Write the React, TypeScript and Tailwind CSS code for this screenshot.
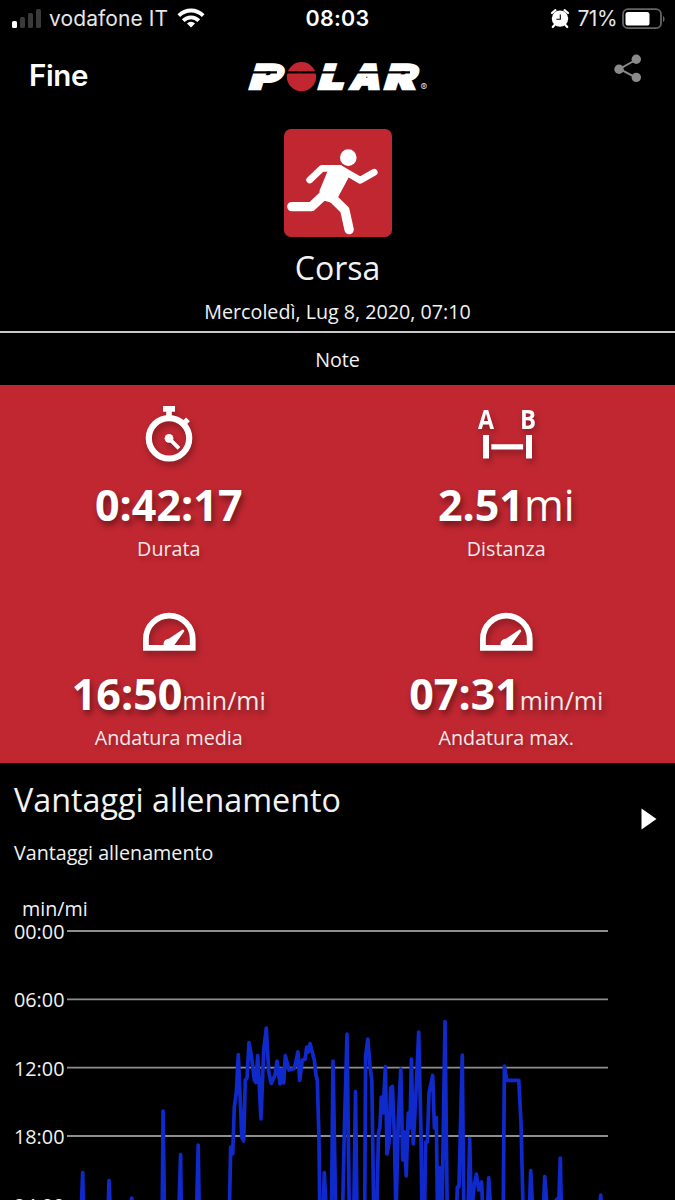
import React from "react";

const stats = [
  { icon: "stopwatch", value: "0:42:17", unit: "", label: "Durata" },
  { icon: "distance", value: "2.51", unit: "mi", label: "Distanza" },
  { icon: "gauge", value: "16:50", unit: "min/mi", label: "Andatura media" },
  { icon: "gauge", value: "07:31", unit: "min/mi", label: "Andatura max." },
];

const ticks = ["00:00", "06:00", "12:00", "18:00", "24:00"];

// pace samples, y grows downwards like the pace axis
const pace: [number, number][] = [
  [81, 1215], [82.7, 1172.5], [83.5, 1215],
  [108, 1215], [109, 1180.5], [110.5, 1215],
  [130.5, 1215], [131.7, 1198], [133, 1215],
  [162.2, 1215], [163.1, 1111], [164.5, 1215],
  [178.8, 1215], [180.6, 1154.5], [181.3, 1215],
  [196.5, 1215], [198.2, 1145], [199.3, 1215],
  [229.3, 1215], [230.7, 1147], [232.7, 1154], [234.3, 1107], [236.3, 1093],
  [238.3, 1054.5], [240.7, 1110], [241.7, 1137], [243.7, 1141], [245.3, 1080],
  [247, 1078], [249, 1042.5], [251.3, 1055], [254.3, 1080], [256, 1082.5],
  [257.7, 1055.5], [261, 1119], [263.7, 1050], [266.3, 1028], [268.7, 1072],
  [271.3, 1083.5], [275, 1075], [277, 1061], [280, 1084], [281.7, 1069],
  [283.7, 1083], [285.3, 1055.5], [289, 1070], [294.3, 1068.5], [298, 1052],
  [299.7, 1080.5], [302.3, 1060], [305, 1059.5], [306.7, 1047], [308.3, 1052],
  [310, 1043.5], [314.3, 1060], [316, 1075], [317.3, 1080], [319, 1140],
  [319.8, 1215], [323, 1215], [324.3, 1172.5], [326.5, 1215],
  [331.5, 1215], [333, 1061], [335.8, 1215],
  [342.5, 1215], [344.3, 1133], [347, 1034], [349.3, 1215],
  [353.8, 1215], [355.5, 1091.5], [357, 1215],
  [364.7, 1215], [365.6, 1057], [367.8, 1039], [370, 1066], [371.8, 1080],
  [373.8, 1215], [376.7, 1215], [378.5, 1133], [380, 1127], [381.3, 1097],
  [383, 1113], [385.4, 1066.5], [387, 1154], [389, 1143], [390.7, 1088],
  [392.4, 1086.5], [394.3, 1133], [396, 1215], [398.3, 1120], [400.8, 1069],
  [402.7, 1160], [404.3, 1132], [406.2, 1176], [408.3, 1113], [410, 1128],
  [411.4, 1059], [413.3, 1144], [416, 1093], [418.7, 1032], [421, 1133],
  [422, 1215], [424.5, 1215], [425.6, 1142], [427.4, 1142], [429, 1093],
  [432.7, 1075.5], [434.4, 1128], [436.3, 1117.5], [437.5, 1215],
  [440, 1167.5], [442, 1215], [445, 1021.5], [447.3, 1215],
  [456.5, 1215], [457.3, 1187], [459, 1187], [462.3, 1055], [463.8, 1215],
  [468, 1215], [469.7, 1138.5], [471.5, 1215], [474, 1187], [476.4, 1174],
  [478.7, 1190], [481.6, 1182], [483, 1215],
  [487.3, 1215], [488.7, 1177.5], [491, 1215],
  [503.2, 1215], [504.4, 1066], [506.7, 1080.3], [518.8, 1080.3], [521, 1123],
  [523.2, 1215], [529.3, 1215], [530.7, 1170.5], [533, 1215],
  [543.3, 1215], [544.7, 1176.5], [547.7, 1215],
  [556.5, 1200], [559, 1197], [560.3, 1158], [561.5, 1215],
  [599.5, 1215], [600.7, 1195], [602, 1215],
];

function StatusBar() {
  return (
    <div className="grid grid-cols-3 items-center h-[37px] font-['Inter',sans-serif] text-white">
      <div className="flex items-center pl-3">
        <svg width="30" height="20" viewBox="0 0 30 20">
          <rect x="0" y="12" width="5" height="7" rx="1.5" fill="#fff" />
          <rect x="8" y="8" width="5" height="11" rx="1.5" fill="#3a3a3a" />
          <rect x="16" y="4" width="5" height="15" rx="1.5" fill="#3a3a3a" />
          <rect x="24" y="0" width="5" height="19" rx="1.5" fill="#3a3a3a" />
        </svg>
        <span className="ml-[7px] text-[21px] leading-[37px] tracking-[0.1px] whitespace-nowrap text-[#e6e6e6]">vodafone IT</span>
        <svg className="ml-[9px] shrink-0" width="28" height="21" viewBox="0 0 28 21" fill="none" stroke="#fff" strokeWidth="3.8">
          <path d="M1.8 7.6a17.2 17.2 0 0 1 24.4 0" />
          <path d="M6.2 12.6a11 11 0 0 1 15.6 0" />
          <path d="M14 19.6l-4-4.1a5.7 5.7 0 0 1 8 0z" fill="#fff" stroke="none" />
        </svg>
      </div>
      <div className="text-center text-[21.5px] leading-[37px] font-semibold tracking-[0.3px]">08:03</div>
      <div className="flex items-center justify-end pr-[10px]">
        <svg width="20" height="20" viewBox="0 0 20 20">
          <circle cx="10" cy="9.6" r="8.2" fill="#fff" />
          <path d="M2 4L5.4 1.2M18 4L14.6 1.2M4.5 16L2.8 18M15.5 16l1.7 2" stroke="#fff" strokeWidth="2.2" strokeLinecap="round" />
          <path d="M10.3 5.4v4.8H6.4" stroke="#000" strokeWidth="1.1" fill="none" />
        </svg>
        <span className="ml-[7px] text-[21px] leading-[37px] font-normal tracking-[-0.5px] text-[#e6e6e6]">71%</span>
        <svg className="ml-[5px]" width="43" height="22" viewBox="0 0 43 22">
          <rect x="1" y="1.2" width="38" height="19" rx="5" fill="none" stroke="#666" strokeWidth="1.8" />
          <rect x="3.5" y="4" width="24" height="13.5" rx="2.6" fill="#fff" />
          <path d="M41 8v6c2-1 2-5 0-6z" fill="#666" />
        </svg>
      </div>
    </div>
  );
}

function Logo() {
  return (
    <svg className="overflow-visible" width="184" height="36" viewBox="0 0 184 36">
      <g fill="#fff" stroke="#fff" strokeWidth="2.6" fontFamily="Inter, sans-serif" fontWeight="900" fontSize="33.5">
        <text transform="translate(1 29.8) skewX(-17)" textLength="31" lengthAdjust="spacingAndGlyphs">P</text>
        <text transform="translate(70 29.8) skewX(-17)" textLength="25" lengthAdjust="spacingAndGlyphs">L</text>
        <text transform="translate(102 29.8) skewX(-14)" textLength="30" lengthAdjust="spacingAndGlyphs">A</text>
        <text transform="translate(136 29.8) skewX(-17)" textLength="31" lengthAdjust="spacingAndGlyphs">R</text>
      </g>
      <circle cx="54.5" cy="17.7" r="14.6" fill="#c12731" />
      <path d="M0 13.4H30M39 13.4H132M134 13.4H163" stroke="#000" strokeWidth="2.4" />
      <text x="173.5" y="31.8" fontFamily="Inter, sans-serif" fontSize="10" fill="#ddd">®</text>
    </svg>
  );
}

function ShareIcon() {
  return (
    <svg width="30" height="30" viewBox="0 0 30 30" fill="#8a8a8a">
      <path d="M23.5 5.5L6.5 15l17 8.8" fill="none" stroke="#8a8a8a" strokeWidth="2" />
      <circle cx="23.3" cy="5.3" r="4.7" />
      <circle cx="6" cy="15.2" r="4.7" />
      <circle cx="23.3" cy="23.4" r="4.7" />
    </svg>
  );
}

function Runner() {
  return (
    <svg width="108" height="108" viewBox="0 0 108 108" fill="none" stroke="#fff" strokeLinecap="round" strokeLinejoin="round">
      <circle cx="64.3" cy="28.6" r="8.3" fill="#fff" stroke="none" />
      <path d="M25.7 51L38 39.3h17" strokeWidth="6.8" />
      <path d="M57 40.1L76.2 51.3l14-8" strokeWidth="6.8" />
      <path d="M46 39L57 37L64 47.5L52.5 69L47 72.5L38 70L36.5 62Z" fill="#fff" strokeWidth="2" />
      <path d="M7.8 77.6H27.5L42 64" strokeWidth="9.4" />
      <path d="M47 67.5L60.8 81l4.3 19.6" strokeWidth="9.4" />
    </svg>
  );
}

function StatIcon({ name }: { name: string }) {
  if (name === "stopwatch") {
    return (
      <svg width="56" height="61" viewBox="0 0 56 61" fill="#fff" stroke="#fff">
        <circle cx="28" cy="34.3" r="20.2" fill="none" strokeWidth="6.2" />
        <path d="M22 2h12v5.7h-3.2V12h-5.6V7.7H22z" stroke="none" />
        <path d="M42 20.2l5-4.8" strokeWidth="5.4" />
        <circle cx="28" cy="34.3" r="4.4" stroke="none" />
        <path d="M28 34.3l10 10" strokeWidth="3.8" />
      </svg>
    );
  }
  if (name === "distance") {
    return (
      <svg className="overflow-visible" width="60" height="61" viewBox="0 0 60 61" fill="#fff">
        <g fontFamily="Open Sans, sans-serif" fontWeight="700" fontSize="27">
          <text x="2" y="25.4" textLength="16" lengthAdjust="spacingAndGlyphs">A</text>
          <text x="44" y="25.4" textLength="16" lengthAdjust="spacingAndGlyphs">B</text>
        </g>
        <path d="M7 31h6v23.5H7zM50 31h6v23.5h-6zM15.3 40.2h31.8v5.4H15.3z" />
      </svg>
    );
  }
  return (
    <svg width="56" height="44" viewBox="0 0 56 44" fill="#fff">
      <path d="M4.9 37.8V29a23.4 23.4 0 0 1 46.8 0v8.8z" fill="none" stroke="#fff" strokeWidth="5.8" />
      <circle cx="27.7" cy="34" r="5.2" />
      <path d="M41.6 19.6q2.2.2 1.5 2L32 37l-6-7z" />
    </svg>
  );
}

function StatTile({ icon, value, unit, label }: (typeof stats)[number]) {
  const bigUnit = unit === "mi";
  return (
    <div className="flex flex-col items-center h-[189px] text-white">
      <div className="flex items-end h-[94px] pb-[14px] drop-shadow-[2px_4px_3px_rgba(0,0,0,0.3)]">
        <StatIcon name={icon} />
      </div>
      <div className="flex items-baseline h-[50px] mt-px text-[43px] leading-[50px] font-bold [text-shadow:2px_4px_6px_rgba(0,0,0,0.45)]">
        {value}
        {unit && (
          <span className={bigUnit ? "font-normal" : "text-[25px] font-normal text-white/90"}>{unit}</span>
        )}
      </div>
      <div className="mt-[5px] text-[19.7px] leading-7 text-white/90 [text-shadow:2px_3px_5px_rgba(0,0,0,0.25)]">{label}</div>
    </div>
  );
}

function PaceChart() {
  return (
    <div className="flex h-[280px] shrink-0">
      <div className="w-[67px] pl-[14px] shrink-0 text-[19.8px]">
        {ticks.map((t) => (
          <div key={t} className="h-[68.4px] leading-[24px]">{t}</div>
        ))}
      </div>
      <svg width="608" height="280" viewBox="67 920 608 280" fill="none">
        <path d="M67 931h541M67 999.3h541M67 1067.7h541M67 1136h541" stroke="#8e8e8e" strokeWidth="1.8" />
        <polyline points={pace.map((p) => p.join(",")).join(" ")} stroke="#1029cb" strokeWidth="3.7" strokeLinejoin="round" strokeLinecap="round" />
      </svg>
    </div>
  );
}

export default function App() {
  return (
    <div className="flex flex-col w-[675px] h-[1200px] overflow-hidden bg-black text-[#f2f2f2] font-['Open_Sans',sans-serif]">
      <StatusBar />

      {/* nav */}
      <header className="grid grid-cols-3 items-start h-[92px] pt-[22px] text-white">
        <div className="pl-[29px] font-['Inter',sans-serif] text-[29.5px] leading-[33px] font-semibold tracking-[-0.4px]">Fine</div>
        <div className="flex justify-center pl-[2px]">
          <Logo />
        </div>
        <div className="flex justify-end pr-[32px] -mt-[5px]">
          <ShareIcon />
        </div>
      </header>

      {/* sport */}
      <section className="flex flex-col items-center h-[204px] border-b-2 border-[#c8c8c8] shrink-0">
        <div className="w-[108px] h-[108px] rounded-[7px] bg-[#c12731]">
          <Runner />
        </div>
        <h1 className="mt-[9px] text-[32px] leading-[44px]">Corsa</h1>
        <p className="mt-2 text-[19.7px] leading-7">Mercoledì, Lug 8, 2020, 07:10</p>
      </section>
      <div className="flex items-center justify-center h-[52px] shrink-0 pt-px text-[19.7px] leading-7">Note</div>

      {/* summary */}
      <section className="grid grid-cols-2 shrink-0 bg-[#c12731]">
        {stats.map((s) => (
          <StatTile key={s.label} {...s} />
        ))}
      </section>

      {/* training benefit */}
      <section className="flex justify-between items-center h-[112px] pl-[14px] pr-[18px] shrink-0">
        <div className="pt-[6px]">
          <h2 className="text-[32.3px] leading-[44px]">Vantaggi allenamento</h2>
          <p className="mt-[18px] text-[19.7px] leading-7">Vantaggi allenamento</p>
        </div>
        <svg width="16" height="22" viewBox="0 0 16 22">
          <path d="M0.5 0.5L15.5 11L0.5 21.5z" fill="#fff" />
        </svg>
      </section>

      <div className="h-[45px] pl-[22px] pt-[23px] shrink-0 text-[19.7px] leading-[22px]">min/mi</div>
      <PaceChart />
    </div>
  );
}
